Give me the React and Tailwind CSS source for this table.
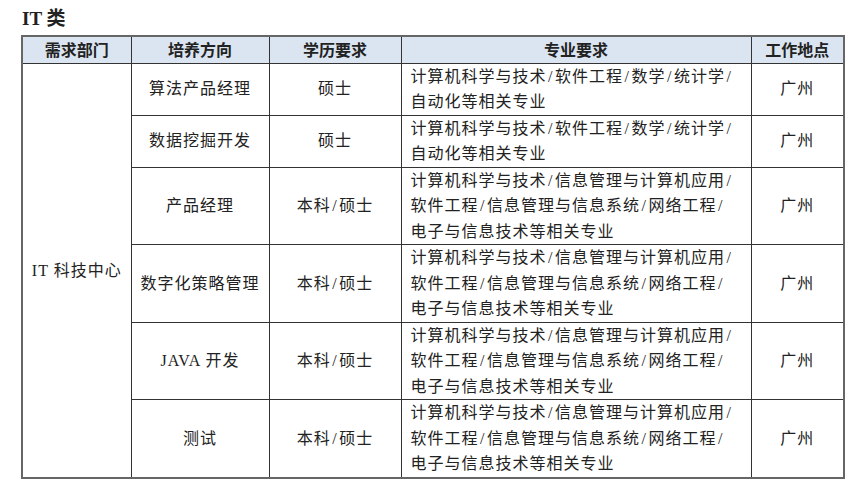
import React from 'react';

const majorA = ['计算机科学与技术/软件工程/数学/统计学/', '自动化等相关专业'];
const majorB = ['计算机科学与技术/信息管理与计算机应用/', '软件工程/信息管理与信息系统/网络工程/', '电子与信息技术等相关专业'];

const rows = [
  { name: '算法产品经理', edu: '硕士', major: majorA, h: 'h-[52px]' },
  { name: '数据挖掘开发', edu: '硕士', major: majorA, h: 'h-[52px]' },
  { name: '产品经理', edu: '本科/硕士', major: majorB, h: 'h-[77px]' },
  { name: '数字化策略管理', edu: '本科/硕士', major: majorB, h: 'h-[77px]' },
  { name: 'JAVA 开发', edu: '本科/硕士', major: majorB, h: 'h-[77px]' },
  { name: '测试', edu: '本科/硕士', major: majorB, h: 'h-[77px]' },
];

const serif = "font-['Liberation_Serif','Noto_Sans_CJK_SC',serif]";
const sans = "font-['Noto_Sans_CJK_SC',sans-serif]";

// slashes in the source font are wider than in Noto, pad them a bit
function Line({ text }) {
  const parts = text.split('/');
  return (
    <div>
      {parts.map((p, i) => (
        <React.Fragment key={i}>
          {p}
          {i < parts.length - 1 && <span className="mx-[1.5px]">/</span>}
        </React.Fragment>
      ))}
    </div>
  );
}

export default function App() {
  return (
    <div className={`w-[857px] h-[489px] bg-white text-[#222] ${serif}`}>
      <div className="pl-[22px] pt-[7px] h-[35px] text-[19px] leading-[24px] font-bold">IT 类</div>
      <table className="ml-[21px] w-[822px] border-collapse border-2 border-[#666] table-fixed text-[16px] leading-[25.5px] tracking-[1px]">
        <colgroup>
          <col className="w-[109px]" />
          <col className="w-[138px]" />
          <col className="w-[132px]" />
          <col className="w-[350px]" />
          <col className="w-[93px]" />
        </colgroup>
        <thead>
          <tr className={`h-[26px] bg-[#dbe5f1] ${sans} font-bold text-[16px] tracking-normal`}>
            <th className="border border-[#333] p-0">需求部门</th>
            <th className="border border-[#333] p-0">培养方向</th>
            <th className="border border-[#333] p-0">学历要求</th>
            <th className="border border-[#333] p-0">专业要求</th>
            <th className="border border-[#333] p-0">工作地点</th>
          </tr>
        </thead>
        <tbody>
          {rows.map((r, i) => (
            <tr key={i} className={r.h}>
              {i === 0 && (
                <td rowSpan={6} className="border border-[#333] text-center align-middle p-0 pt-[2px]">
                  IT 科技中心
                </td>
              )}
              <td className="border border-[#333] text-center align-middle p-0">{r.name}</td>
              <td className="border border-[#333] text-center align-middle p-0">
                <Line text={r.edu} />
              </td>
              <td className="border border-[#333] align-middle pl-[9px] pr-0 py-0 whitespace-nowrap">
                {r.major.map((l, j) => (
                  <Line key={j} text={l} />
                ))}
              </td>
              <td className="border border-[#333] text-center align-middle p-0">广州</td>
            </tr>
          ))}
        </tbody>
      </table>
    </div>
  );
}
